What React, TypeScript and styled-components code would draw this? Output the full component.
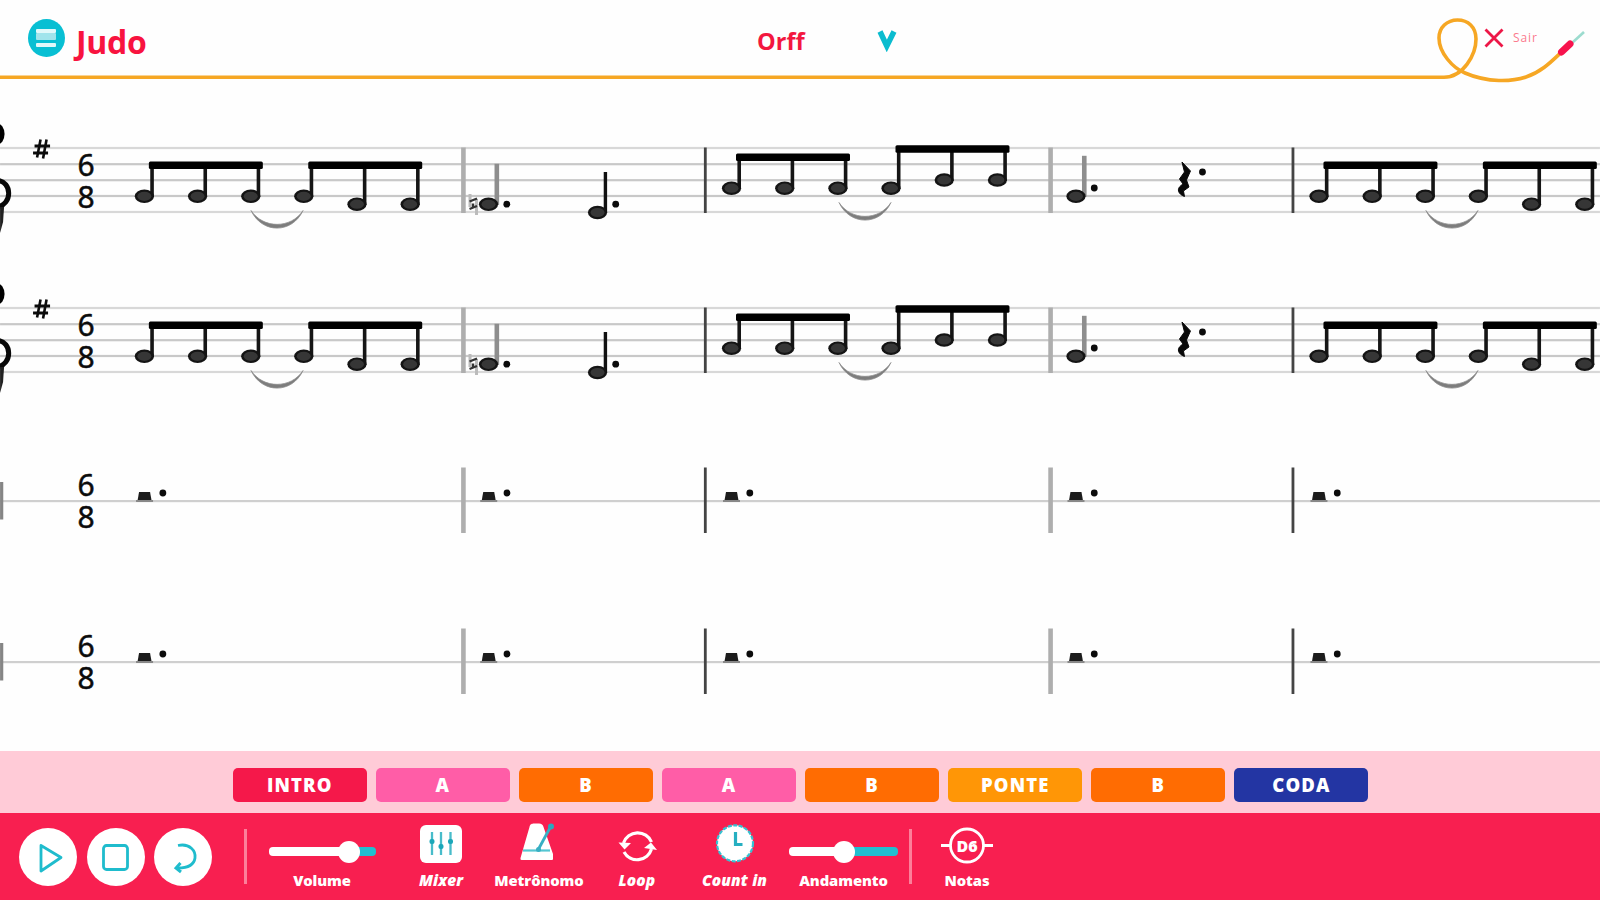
import React from "react";
import styled, { createGlobalStyle } from "styled-components";

const GlobalStyle = createGlobalStyle`
  * { box-sizing: border-box; }
  body { margin: 0; background: #fefefe; font-family: "Open Sans", "Noto Sans", sans-serif; }
`;

const Page = styled.div`
  width: 1600px;
  height: 900px;
  display: flex;
  flex-direction: column;
  overflow: hidden;
  background: #fefefe;
`;

const Header = styled.header`
  position: relative;
  height: 80px;
  flex: none;
  display: flex;
  align-items: flex-start;
  padding-top: 19px;
`;

const Cord = styled.svg`
  position: absolute;
  left: 0;
  top: 0;
`;

const MenuButton = styled.button`
  width: 37px;
  height: 38px;
  margin-left: 27.5px;
  padding: 0;
  border: 0;
  border-radius: 50%;
  background: #08bfd3;
  display: flex;
  flex-direction: column;
  align-items: center;
  justify-content: center;
`;

const MenuLine = styled.span<{ $pale?: boolean }>`
  width: 20px;
  height: ${(p) => (p.$pale ? 7 : 4)}px;
  margin-bottom: ${(p) => (p.$pale ? 3 : 0)}px;
  border-radius: 1px;
  background: ${(p) => (p.$pale ? "#a0e4ec" : "#e0f8fa")};
`;

const Title = styled.h1`
  width: 90px;
  margin: 1px 0 0 11.5px;
  font: 700 32px/44px "Open Sans", sans-serif;
  letter-spacing: -0.3px;
  color: #f8133f;
`;

const Instrument = styled.div`
  margin-left: 591px;
  width: 140px;
  height: 44px;
  display: flex;
  align-items: center;
  justify-content: space-between;
  color: #f3173f;
  font: 700 23.5px/44px "Open Sans", sans-serif;
`;

const Exit = styled.button`
  margin-left: 587px;
  margin-top: 9px;
  padding: 0;
  border: 0;
  background: none;
  display: flex;
  align-items: center;
  gap: 9px;
  height: 20px;
  color: #fb7a8e;
  font: 400 12px/22px "Open Sans", sans-serif;
  letter-spacing: 0.9px;
`;

const Score = styled.main`
  flex: 1;
  padding-top: 20px;
  display: flex;
  flex-direction: column;
`;

const StaffSvg = styled.svg`
  display: block;
  flex: none;
  overflow: visible;
`;

const Sections = styled.nav`
  flex: none;
  height: 61.8px;
  display: flex;
  align-items: flex-start;
  justify-content: center;
  gap: 9.1px;
  padding: 16.800px 0 0 1.200px;
  background: #ffcbd7;
`;

const Section = styled.button<{ $color: string }>`
  width: 134px;
  height: 34px;
  padding: 0;
  border: 0;
  border-radius: 5px;
  background: ${(p) => p.$color};
  color: #fff;
  font: 800 18.500px/34px "Open Sans", sans-serif;
  letter-spacing: 1.100px;
`;

const Player = styled.footer`
  flex: none;
  height: 87px;
  display: flex;
  padding-left: 19px;
  background: #f81f50;
`;

const Transport = styled.div`
  display: flex;
  gap: 9.5px;
  padding-top: 15px;
`;

const RoundButton = styled.button`
  width: 58px;
  height: 58px;
  padding: 0;
  border: 0;
  border-radius: 50%;
  background: #fff;
`;

const Divider = styled.div<{ $left: number; $right: number }>`
  width: 3px;
  height: 55px;
  margin: 16px ${(p) => p.$right}px 0 ${(p) => p.$left}px;
  background: #fc7f9a;
`;

const Control = styled.div<{ $width: number }>`
  width: ${(p) => p.$width}px;
  display: flex;
  flex-direction: column;
  align-items: center;
  padding-top: 9px;
`;

const ControlIcon = styled.div`
  height: 48px;
`;

const Label = styled.span<{ $slanted?: boolean }>`
  white-space: nowrap;
  color: #fff;
  font: 800 14.5px/20px "Open Sans", sans-serif;
  font-size: ${(p) => (p.$slanted ? 15.5 : 14.8)}px;
  font-style: ${(p) => (p.$slanted ? "italic" : "normal")};
  letter-spacing: ${(p) => (p.$slanted ? 0.1 : -0.1)}px;
`;

const Track = styled.div<{ $width: number; $level: number }>`
  width: ${(p) => p.$width}px;
  height: 9px;
  margin: 25px 0 14px;
  border-radius: 4px;
  display: flex;
  align-items: center;
  background: linear-gradient(to right, #fff ${(p) => p.$level}%, #21bfd0 ${(p) => p.$level}%);
`;

const Thumb = styled.span<{ $offset: number }>`
  width: 22px;
  height: 22px;
  margin-left: ${(p) => p.$offset}px;
  border-radius: 50%;
  background: #fff;
`;

const Gap = styled.div<{ $width: number }>`
  width: ${(p) => p.$width}px;
`;

const BAR_LINES = [
  { x: 463.4, soft: true },
  { x: 705.3, soft: false },
  { x: 1050.6, soft: true },
  { x: 1293, soft: false },
];

function BarLines() {
  return (
    <>
      {BAR_LINES.map((b) => (
        <rect
          key={b.x}
          x={b.x - (b.soft ? 2.3 : 1.4)}
          y={47.5}
          width={b.soft ? 4.6 : 2.8}
          height={65.5}
          fill={b.soft ? "#aeaeae" : "#444"}
        />
      ))}
    </>
  );
}

function TimeSignature() {
  return (
    <g
      fontFamily="Noto Sans, sans-serif"
      fontSize="30"
      textAnchor="middle"
      fill="#0b0b0b"
      stroke="#0b0b0b"
      strokeWidth="0.5"
    >
      <text x="86" y="76">6</text>
      <text x="86" y="108">8</text>
    </g>
  );
}

function Head({ x, y }: { x: number; y: number }) {
  return (
    <g>
      <ellipse cx={x} cy={y} rx="9.6" ry="6.8" fill="#141414" />
      <ellipse cx={x} cy={y} rx="7" ry="4.6" fill="#363636" />
    </g>
  );
}

function Beamed({ x, ys, beam }: { x: number; ys: number[]; beam: number }) {
  return (
    <g>
      {ys.map((y, i) => {
        const cx = x + i * 53.2;
        return (
          <g key={i}>
            <rect x={cx + 5.9} y={beam + 2} width="3.6" height={y - beam - 1} fill="#151515" />
            <Head x={cx} y={y} />
          </g>
        );
      })}
      <rect x={x + 4.5} y={beam} width="114" height="7.4" rx="1.5" fill="#000" />
    </g>
  );
}

function Quarter({ x, y, dotX, dotY, soft }: { x: number; y: number; dotX: number; dotY: number; soft?: boolean }) {
  return (
    <g>
      <rect x={x + (soft ? 6 : 6.2)} y={y - 40.5} width={soft ? 4.6 : 3.4} height="41" fill={soft ? "#8e8e8e" : "#111"} />
      <Head x={x} y={y} />
      <circle cx={dotX} cy={dotY} r="3.4" fill="#0b0b0b" />
    </g>
  );
}

function Slur({ x, y }: { x: number; y: number }) {
  return (
    <path
      d={`M${x} ${y}C${x + 11} ${y + 23.5} ${x + 41} ${y + 23.5} ${x + 52} ${y}C${x + 40} ${y + 18.5} ${x + 12} ${y + 18.5} ${x} ${y}Z`}
      fill="#7d7d7d"
      stroke="#8f8f8f"
      strokeWidth="0.8"
    />
  );
}

function MelodyStaff() {
  return (
    <StaffSvg width="1600" height="160.2" viewBox="0 0 1600 160.2">
      {[48, 64.2, 80.2, 96, 112].map((y, i) => (
        <rect key={y} x="0" y={y - 1.1} width="1600" height="2.2" fill={i === 0 || i === 4 ? "#d8d8d8" : "#c8c8c8"} />
      ))}
      <BarLines />
      <ellipse cx="-3" cy="34" rx="7.5" ry="10.5" fill="#000" />
      <path d="M-3 80.5C12.500 81 12.500 105 -3 107" fill="none" stroke="#080808" strokeWidth="5" />
      <path d="M0 107H4L3 122L0 133Z" fill="#222" />
      <g stroke="#0b0b0b" fill="none">
        <path d="M40.500 39.500L37 57.500M46.500 39.500L43 58.500" strokeWidth="2.600" />
        <path d="M34.500 46H50M33 53H48" strokeWidth="2.800" />
      </g>
      <TimeSignature />
      <Beamed x={144.3} ys={[96.3, 96.3, 96.3]} beam={61.5} />
      <Beamed x={303.7} ys={[96.3, 104.200, 104.200]} beam={61.5} />
      <Slur x={251} y={110.5} />
      <g fill="none">
        <path d="M470 94V107M476.500 99V115" stroke="#bbb" strokeWidth="3" />
        <path d="M469.500 101.500L477 98.500M469.500 109L477 106M473 103.500V107" stroke="#333" strokeWidth="2.400" />
      </g>
      <Quarter x={488.5} y={104.3} dotX={506.8} dotY={104.2} soft />
      <Quarter x={597.5} y={112.5} dotX={615.7} dotY={104.2} />
      <Beamed x={731.5} ys={[88.2, 88.2, 88.2]} beam={53.5} />
      <Beamed x={891} ys={[88.2, 80, 80]} beam={45.3} />
      <Slur x={839} y={102.5} />
      <Quarter x={1076} y={96.3} dotX={1094.3} dotY={88} soft />
      <path
        d="M1182 62L1190.500 71L1186.500 80L1189 87L1183.500 91L1184.500 96.500C1178 94 1176.500 89 1181 85.500L1183 84L1179.500 79L1184.500 72Z"
        fill="#080808"
        stroke="#080808"
        strokeWidth="1"
      />
      <circle cx="1202.5" cy="72" r="3.4" fill="#0b0b0b" />
      <Beamed x={1319} ys={[96.3, 96.3, 96.3]} beam={61.5} />
      <Beamed x={1478.4} ys={[96.3, 104.2, 104.2]} beam={61.5} />
      <Slur x={1426} y={110.5} />
    </StaffSvg>
  );
}

function RestStaff() {
  return (
    <StaffSvg width="1600" height="160.2" viewBox="0 0 1600 160.2">
      <rect x="0" y="80" width="1600" height="2.2" fill="#cfcfcf" />
      <rect x="0" y="62" width="3.2" height="37.5" fill="#858585" />
      <BarLines />
      <TimeSignature />
      {[144.5, 488.7, 731.5, 1076, 1319].map((x) => (
        <g key={x}>
          <path d={`M${x - 5.5} 72H${x + 5.5}L${x + 7} 80.500H${x - 7}Z`} fill="#1c1c1c" />
          <rect x={x - 8.500} y="80" width="17" height="2" fill="#888" />
          <circle cx={x + 18.3} cy="73" r="3.400" fill="#0b0b0b" />
        </g>
      ))}
    </StaffSvg>
  );
}

const SECTIONS = [
  { name: "INTRO", color: "#f5184a" },
  { name: "A", color: "#ff5da7" },
  { name: "B", color: "#ff6c02" },
  { name: "A", color: "#ff5da7" },
  { name: "B", color: "#ff6c02" },
  { name: "PONTE", color: "#ff9606" },
  { name: "B", color: "#ff6c02" },
  { name: "CODA", color: "#2335a3" },
];

const TEAL = "#1fbccd";

export default function App() {
  return (
    <>
      <GlobalStyle />
      <Page>
        <Header>
          <Cord width="1600" height="92" viewBox="0 0 1600 92">
            <path
              d="M0 77.200H1444C1463 77.200 1476 55 1476 39C1476 27 1468 20 1457.500 20C1447 20 1439 27.500 1439 38C1439 53 1453 68 1465 73C1488 83 1512 81.500 1526 77C1541 72 1551 62 1560 53.500"
              fill="none"
              stroke="#f6a724"
              strokeWidth="3.600"
            />
            <path d="M1572 43L1584 32" stroke="#9cdccf" strokeWidth="2.600" />
            <path d="M1561.500 52L1570 44" stroke="#f7134d" strokeWidth="7" strokeLinecap="round" />
          </Cord>
          <MenuButton aria-label="Menu">
            <MenuLine />
            <MenuLine $pale />
            <MenuLine />
          </MenuButton>
          <Title>Judo</Title>
          <Instrument>
            <span>Orff</span>
            <svg width="20" height="22" viewBox="0 0 20 22">
              <path d="M3 1.500L9.800 16L17 1.500" fill="none" stroke="#0bbccf" strokeWidth="5.500" />
            </svg>
          </Instrument>
          <Exit>
            <svg width="20" height="20" viewBox="0 0 20 20">
              <path d="M1.500 1.500L18.500 18.500M18.500 1.500L1.500 18.500" stroke="#ed1747" strokeWidth="2.800" />
            </svg>
            Sair
          </Exit>
        </Header>

        <Score>
          <MelodyStaff />
          <MelodyStaff />
          <RestStaff />
          <RestStaff />
        </Score>

        <Sections>
          {SECTIONS.map((s, i) => (
            <Section key={i} $color={s.color}>{s.name}</Section>
          ))}
        </Sections>

        <Player>
          <Transport>
            <RoundButton aria-label="Play">
              <svg width="58" height="58" viewBox="0 0 58 58">
                <path d="M22 17.500L42 29.500L22 43Z" fill="none" stroke={TEAL} strokeWidth="2.800" strokeLinejoin="round" />
              </svg>
            </RoundButton>
            <RoundButton aria-label="Stop">
              <svg width="58" height="58" viewBox="0 0 58 58">
                <rect x="16.500" y="17.500" width="24" height="24" rx="3" fill="none" stroke={TEAL} strokeWidth="2.800" />
              </svg>
            </RoundButton>
            <RoundButton aria-label="Return">
              <svg width="58" height="58" viewBox="0 0 58 58">
                <path d="M24 17.500C36 15 42 23 41 30C40 37 34 40 24 40" fill="none" stroke={TEAL} strokeWidth="2.800" />
                <path d="M26.500 35L22 40L27 44" fill="none" stroke={TEAL} strokeWidth="3" />
              </svg>
            </RoundButton>
          </Transport>
          <Divider $left={32} $right={21} />
          <Control $width={108}>
            <Track $width={107} $level={75}><Thumb $offset={69} /></Track>
            <Label>Volume</Label>
          </Control>
          <Gap $width={16} />
          <Control $width={98}>
            <ControlIcon>
              <svg width="44" height="48" viewBox="0 0 44 48">
                <rect x="1" y="3" width="42" height="38" rx="6" fill="#fff" />
                <path d="M13 10V33M22 10V33M31.500 10V33" stroke="#48bcca" strokeWidth="2.300" />
                <g fill="#1ba7b9">
                  <rect x="10.500" y="17" width="5" height="5" rx="2" />
                  <rect x="19.500" y="22" width="5" height="5" rx="2" />
                  <rect x="29" y="17" width="5" height="5" rx="2" />
                </g>
              </svg>
            </ControlIcon>
            <Label $slanted>Mixer</Label>
          </Control>
          <Control $width={98}>
            <ControlIcon>
              <svg width="40" height="48" viewBox="0 0 40 48">
                <path d="M10.500 5C11 2 13 1.500 15 1.500H20C22.500 1.500 24 3 24.500 5L34 32V37Q34 38 33 38H2.500Q1 38 1.500 36Z" fill="#fff" />
                <path d="M4 28.500H31" stroke="#55c6d2" strokeWidth="2.200" />
                <path d="M19 28L32 4" stroke="#38afc3" strokeWidth="2.800" />
                <circle cx="19.500" cy="27.500" r="2.500" fill="#38afc3" />
                <circle cx="32" cy="4.500" r="3" fill="#29a9bf" />
              </svg>
            </ControlIcon>
            <Label>Metrônomo</Label>
          </Control>
          <Control $width={98}>
            <ControlIcon>
              <svg width="40" height="48" viewBox="0 0 40 48">
                <g fill="none" stroke="#fff" strokeWidth="3.200">
                  <path d="M6.500 21A15 15 0 0 1 34.500 20" />
                  <path d="M34.500 27A15 15 0 0 1 7 30" />
                </g>
                <path d="M1.500 20.500L14 21L7.500 27.500ZM27 26L34 20.500L40 28Z" fill="#fff" />
              </svg>
            </ControlIcon>
            <Label $slanted>Loop</Label>
          </Control>
          <Control $width={97}>
            <ControlIcon>
              <svg width="40" height="48" viewBox="0 0 40 48">
                <circle cx="20" cy="21.300" r="18" fill="#fff" stroke="#35c2d2" strokeWidth="2.200" strokeDasharray="4 1.500" />
                <path d="M20.500 10V22.500H27.500" fill="none" stroke="#26afc1" strokeWidth="3.200" />
              </svg>
            </ControlIcon>
            <Label $slanted>Count in</Label>
          </Control>
          <Gap $width={6} />
          <Control $width={109}>
            <Track $width={109} $level={50}><Thumb $offset={43.5} /></Track>
            <Label>Andamento</Label>
          </Control>
          <Divider $left={11} $right={25} />
          <Control $width={60}>
            <ControlIcon>
              <svg width="54" height="48" viewBox="0 0 54 48">
                <circle cx="27" cy="23.500" r="16.500" fill="none" stroke="#fff" strokeWidth="2.800" />
                <path d="M1 23.500H11M43 23.500H53" stroke="#fff" strokeWidth="3" />
                <text x="27" y="30" textAnchor="middle" fill="#fff" fontFamily="Open Sans, sans-serif" fontSize="16" fontWeight="800">D6</text>
              </svg>
            </ControlIcon>
            <Label>Notas</Label>
          </Control>
        </Player>
      </Page>
    </>
  );
}
